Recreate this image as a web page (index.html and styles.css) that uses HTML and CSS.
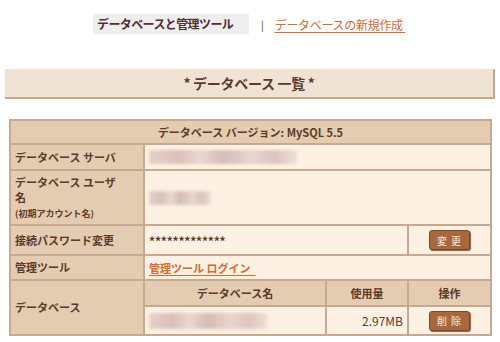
FILE: index.html
```html
<!DOCTYPE html>
<html lang="ja">
<head>
  <meta charset="UTF-8" />
  <title>データベース一覧</title>
  <link rel="stylesheet" href="styles.css">
</head>
<body>

  <div class="nav">
    <span class="nav-current">データベースと管理ツール</span>
    <span class="nav-sep">|</span>
    <a class="nav-link" href="#">データベースの新規作成&nbsp;</a>
  </div>

  <div class="title">* データベース 一覧 *</div>

  <table class="db-table">
    <colgroup>
      <col class="c-label" />
      <col class="c-name" />
      <col class="c-usage" />
      <col class="c-op" />
    </colgroup>
    <tr class="r-head">
      <th colspan="4">データベース バージョン: MySQL 5.5</th>
    </tr>
    <tr class="r-server">
      <th class="label">データベース サーバ</th>
      <td colspan="3"><span class="blur blur-server"></span></td>
    </tr>
    <tr class="r-user">
      <th class="label">データベース ユーザ<br>名<br><small>(初期アカウント名)</small></th>
      <td colspan="3"><span class="blur blur-user"></span></td>
    </tr>
    <tr class="r-pass">
      <th class="label">接続パスワード変更</th>
      <td colspan="2" class="stars">*************</td>
      <td class="center"><button class="btn">変 更</button></td>
    </tr>
    <tr class="r-tool">
      <th class="label">管理ツール</th>
      <td colspan="3"><a class="tool-link" href="#">管理ツール ログイン&nbsp;&nbsp;</a></td>
    </tr>
    <tr class="r-subhead">
      <th class="label" rowspan="2">データベース</th>
      <th class="sub">データベース名</th>
      <th class="sub">使用量</th>
      <th class="sub">操作</th>
    </tr>
    <tr class="r-db">
      <td><span class="blur blur-name"></span></td>
      <td class="num">2.97MB</td>
      <td class="center"><button class="btn">削 除</button></td>
    </tr>
  </table>

</body>
</html>
```

FILE: styles.css
```css
* { margin: 0; padding: 0; box-sizing: border-box; }
html, body {
  width: 100%;
  height: 100%;
  overflow: hidden;
  background: white;
  font-family: "Noto Sans CJK JP", "DejaVu Sans", sans-serif;
  color: #5b3a2c;
}

.nav {
  display: flex;
  align-items: center;
  padding: 14px 0 0 93px;
  font-size: 12px;
}

.nav-current {
  display: block;
  width: 156px;
  height: 20px;
  line-height: 20px;
  padding-left: 4px;
  background: #eeeeee;
  font-weight: bold;
  color: #4e3030;
  letter-spacing: -0.6px;
}

.nav-sep {
  margin: 0 11px 0 12px;
  font-size: 10px;
  color: #333;
}

.nav-link {
  color: #d26a32;
  text-decoration: underline;
  text-underline-offset: 2px;
  letter-spacing: -0.3px;
}

.title {
  margin: 35px 5px 0 5px;
  height: 30px;
  line-height: 28px;
  background: #f1e3d4;
  border-bottom: 2px solid #c9a68b;
  border-right: 2px solid #c9a68b;
  text-align: center;
  font-size: 14px;
  font-weight: bold;
  color: #5b3a2c;
  letter-spacing: -0.3px;
}

.db-table {
  margin: 20px 0 0 9px;
  width: 481px;
  border-collapse: collapse;
  table-layout: fixed;
  font-size: 11px;
}

.c-label { width: 134px; }
.c-name { width: 182px; }
.c-usage { width: 82px; }
.c-op { width: 83px; }

.db-table th,
.db-table td {
  border: 2px solid #c8a890;
  padding: 0 4px;
}

.db-table th {
  background: #e4ccb0;
  font-weight: bold;
  text-align: left;
}

.db-table td {
  background: #fdf1e4;
}

.r-head th {
  text-align: center;
  height: 24px;
}

.r-server th, .r-server td { height: 26px; }
.r-user th, .r-user td { height: 55px; }
.r-pass th, .r-pass td { height: 30px; }
.r-tool th, .r-tool td { height: 25px; }
.r-subhead th { height: 26px; }
.r-db td { height: 29px; }

.label { line-height: 15px; }
.label small {
  font-size: 9px;
  line-height: 13px;
}

.db-table th.sub { text-align: center; }

.center { text-align: center; }
.num { text-align: right; font-size: 12px; }

.db-table td.stars {
  font-size: 12px;
  font-weight: bold;
  letter-spacing: -0.2px;
}

.tool-link {
  color: #d26a32;
  font-weight: bold;
  text-decoration: underline;
  text-underline-offset: 2px;
}

.btn {
  width: 41px;
  height: 20px;
  background: #a8683f;
  border: 1px solid #7a4a2c;
  border-radius: 3px;
  box-shadow: 1px 1px 1px #8a5a3c;
  color: #f7ece0;
  font-family: "Noto Sans CJK JP", sans-serif;
  font-size: 10px;
  letter-spacing: 1px;
  cursor: pointer;
}

.blur {
  display: block;
  height: 14px;
  border-radius: 2px;
  filter: blur(1.5px);
  background: linear-gradient(90deg, #e6d2cb 0%, #d9c0b9 20%, #ead8d0 35%, #d5bcb5 50%, #e8d6cf 70%, #dcc4bd 85%, #efe0d8 100%);
}

.blur-server { width: 148px; }
.blur-user { width: 62px; }
.blur-name { width: 118px; height: 16px; }
```
